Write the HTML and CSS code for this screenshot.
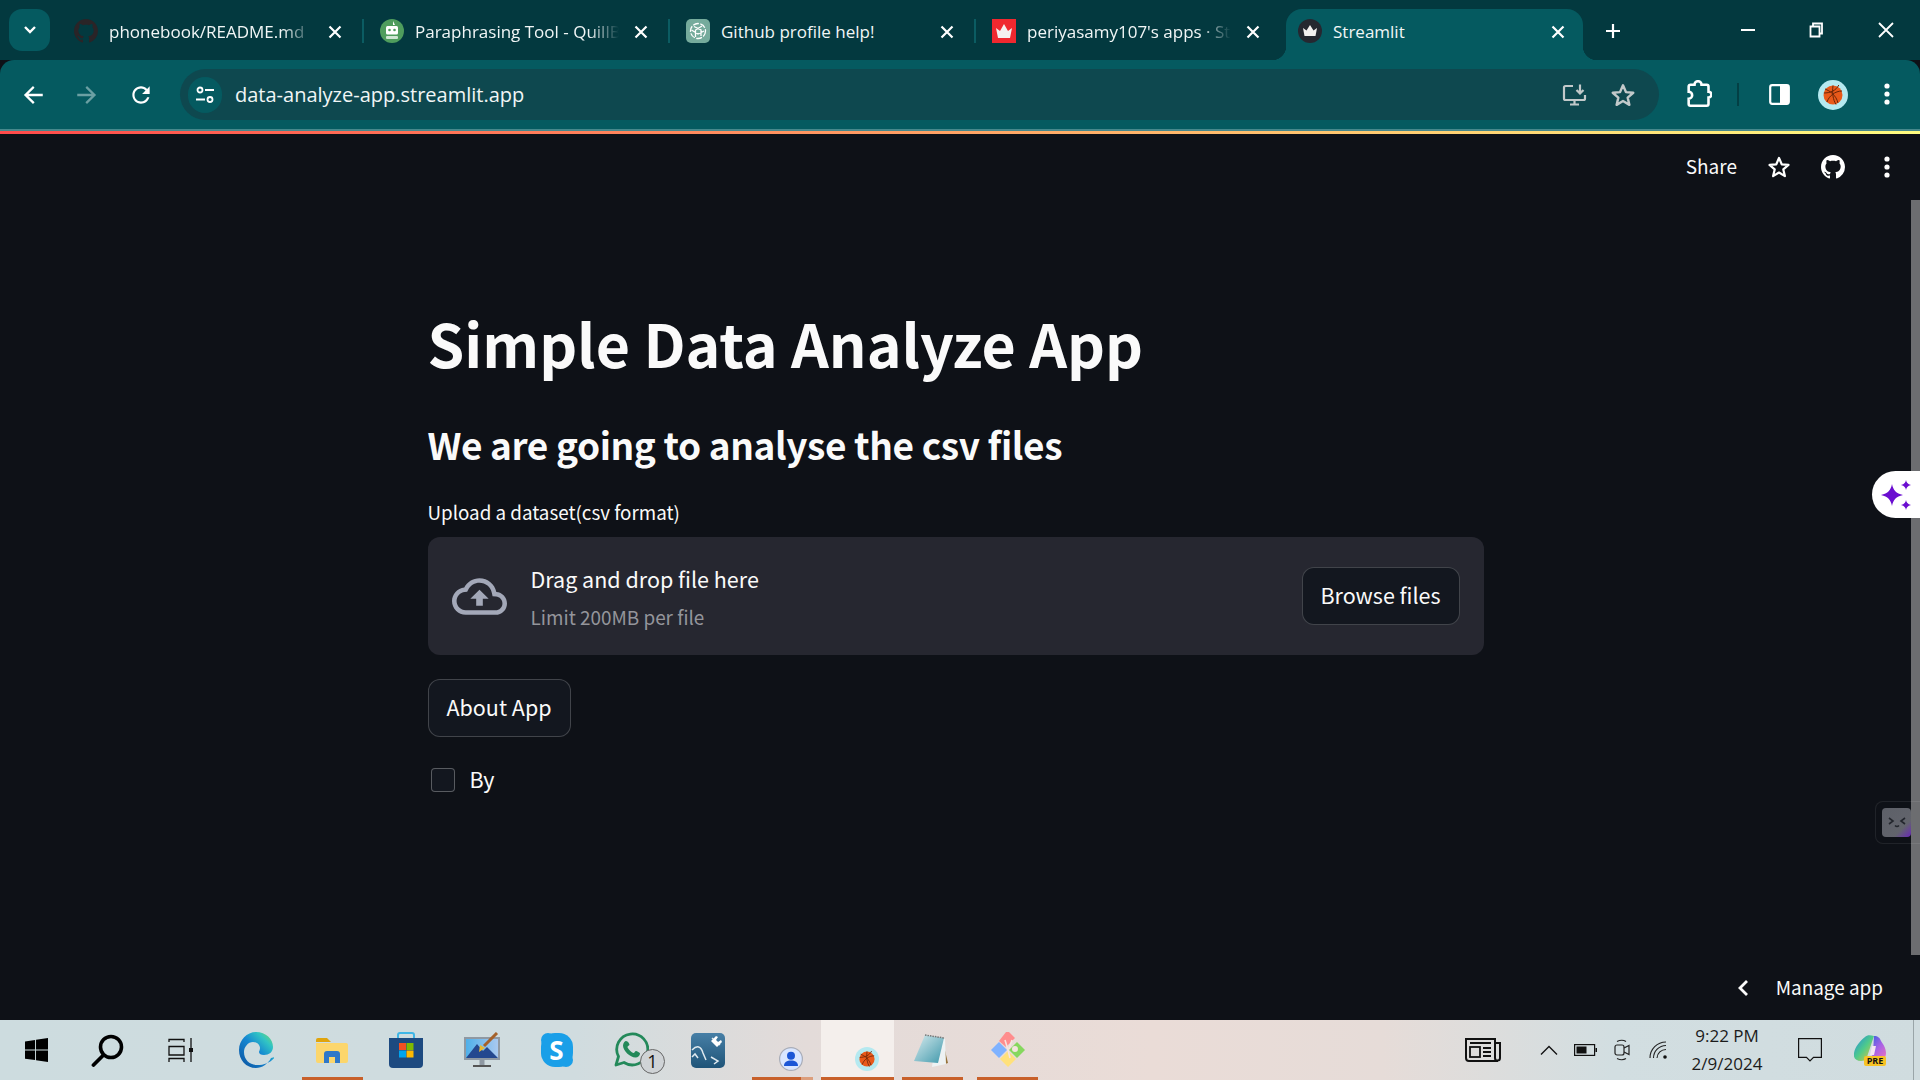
FILE: index.html
```html
<!DOCTYPE html>
<html lang="en">
<head>
<meta charset="utf-8">
<title>Streamlit</title>
<link rel="stylesheet" href="styles.css">
</head>
<body>
<svg class="sprite" aria-hidden="true">
  <defs>
    <symbol id="gh" viewBox="0 0 16 16"><path d="M8 0C3.58 0 0 3.58 0 8c0 3.54 2.29 6.53 5.47 7.59.4.07.55-.17.55-.38 0-.19-.01-.82-.01-1.49-2.01.37-2.53-.49-2.69-.94-.09-.23-.48-.94-.82-1.13-.28-.15-.68-.52-.01-.53.63-.01 1.08.58 1.23.82.72 1.21 1.87.87 2.33.66.07-.52.28-.87.51-1.07-1.78-.2-3.64-.89-3.64-3.95 0-.87.31-1.59.82-2.15-.08-.2-.36-1.02.08-2.12 0 0 .67-.21 2.2.82.64-.18 1.32-.27 2-.27.68 0 1.36.09 2 .27 1.53-1.04 2.2-.82 2.2-.82.44 1.1.16 1.92.08 2.12.51.56.82 1.27.82 2.15 0 3.07-1.87 3.75-3.65 3.95.29.25.54.73.54 1.48 0 1.07-.01 1.93-.01 2.2 0 .21.15.46.55.38A8.013 8.013 0 0016 8c0-4.42-3.58-8-8-8z"/></symbol>
    <symbol id="star" viewBox="0 0 24 24"><path d="M12 3l2.7 6.3 6.8.6-5.2 4.5 1.6 6.7-5.9-3.6-5.9 3.6 1.6-6.7-5.2-4.5 6.8-.6z" fill="none" stroke="currentColor" stroke-width="2.2" stroke-linejoin="round"/></symbol>
    <symbol id="dots" viewBox="0 0 18 24"><circle cx="9" cy="4" r="2.6" fill="currentColor"/><circle cx="9" cy="12" r="2.6" fill="currentColor"/><circle cx="9" cy="20" r="2.6" fill="currentColor"/></symbol>
    <symbol id="close" viewBox="0 0 18 18"><path d="M3.5 3.5l11 11M14.5 3.5l-11 11" stroke="currentColor" stroke-width="2.2" fill="none"/></symbol>
    <symbol id="ball" viewBox="0 0 30 30"><circle cx="15" cy="15" r="15" fill="#b5e9f0"/><circle cx="15" cy="15" r="9.500" fill="#e9591a"/><path d="M5.800 13c6 0 12-2 15-8M9 22c2-6 8-11 15-11M15 5.500c-1 8 0 14 3 19M7 9c5 2 11 6 13 14" stroke="#6b2508" stroke-width="1" fill="none"/></symbol>
    <linearGradient id="edgeG" x1="0" y1="1" x2="1" y2="0"><stop offset="0" stop-color="#0b4f9c"/><stop offset=".5" stop-color="#1587d2"/><stop offset=".75" stop-color="#31c4c4"/><stop offset="1" stop-color="#85dd55"/></linearGradient>
    <linearGradient id="wbG" x1="0" y1="0" x2="0" y2="1"><stop offset="0" stop-color="#477fa6"/><stop offset="1" stop-color="#1f5478"/></linearGradient>
    <linearGradient id="noteG" x1="0" y1="0" x2="1" y2="1"><stop offset="0" stop-color="#d9ecef"/><stop offset="1" stop-color="#3f98ab"/></linearGradient>
    <linearGradient id="paintG" x1="0" y1="0" x2="1" y2="0"><stop offset="0" stop-color="#4fb0ea"/><stop offset="1" stop-color="#a9c9f0"/></linearGradient>
    <linearGradient id="copG" x1="0" y1="0" x2="1" y2="1"><stop offset="0" stop-color="#1f8ae0"/><stop offset=".5" stop-color="#4fcb8a"/><stop offset="1" stop-color="#f6c530"/></linearGradient>
    <linearGradient id="copH" x1="0" y1="0" x2="1" y2="1"><stop offset="0" stop-color="#1d5fe0"/><stop offset=".55" stop-color="#a862e6"/><stop offset="1" stop-color="#ee74bc"/></linearGradient>
    <linearGradient id="sqG" x1="0" y1="0" x2="1" y2="1"><stop offset="0" stop-color="#5d6068"/><stop offset=".7" stop-color="#62646c"/><stop offset="1" stop-color="#6a28b8"/></linearGradient>
  </defs>
</svg>

<header class="tabstrip">
  <div class="tabmenu">
    <svg class="i-chev" viewBox="0 0 14 10"><path d="M2 2l5 5 5-5" fill="none" stroke="#fff" stroke-width="2.400"/></svg>
  </div>
  <div class="tab tab-sep">
    <svg class="fav fav-dark" viewBox="0 0 16 16"><use href="#gh"/></svg>
    <span class="tab-title tab-fade">phonebook/README.md</span>
    <svg class="tab-x"><use href="#close"/></svg>
  </div>
  <div class="tab tab-sep">
    <svg class="fav" viewBox="0 0 24 24"><circle cx="12" cy="12" r="12" fill="#4f9d5d"/><path d="M13 2l2 4h-2z" fill="#fff"/><rect x="6" y="7" width="12" height="8.500" rx="1.500" fill="#fff"/><circle cx="9.500" cy="11" r="1.300" fill="#4f9d5d"/><circle cx="14.500" cy="11" r="1.300" fill="#4f9d5d"/><rect x="6" y="17" width="12" height="3" rx="1" fill="#cfe6d3"/></svg>
    <span class="tab-title tab-fade">Paraphrasing Tool - QuillB</span>
    <svg class="tab-x"><use href="#close"/></svg>
  </div>
  <div class="tab tab-sep">
    <svg class="fav" viewBox="0 0 24 24"><rect width="24" height="24" rx="5" fill="#75ab9c"/><g fill="none" stroke="#fff" stroke-width="1.300"><circle cx="12" cy="12" r="7.500" stroke-dasharray="6 1.500"/><path d="M8 7.500l7 3.500v6M16 7l-6.500 4v7M5.500 11l6.500 4 6-3"/></g></svg>
    <span class="tab-title">Github profile help!</span>
    <svg class="tab-x"><use href="#close"/></svg>
  </div>
  <div class="tab">
    <svg class="fav" viewBox="0 0 24 24"><rect width="24" height="24" fill="#f0282f"/><path class="crown-w" d="M4 9l4 3 4-7 4 7 4-3-2 10H6z"/></svg>
    <span class="tab-title tab-fade">periyasamy107's apps · St</span>
    <svg class="tab-x"><use href="#close"/></svg>
  </div>
  <div class="tab tab-active">
    <svg class="fav" viewBox="0 0 24 24"><circle cx="12" cy="12" r="12" fill="#262730"/><path class="crown-w" d="M5 9l3.500 2.500L12 6l3.500 5.500L19 9l-1.500 8h-11z"/></svg>
    <span class="tab-title">Streamlit</span>
    <svg class="tab-x"><use href="#close"/></svg>
  </div>
  <svg class="tab-new" viewBox="0 0 18 18"><path d="M9 2v14M2 9h14" stroke="#fff" stroke-width="2.200"/></svg>
  <div class="winctl">
    <span class="winbtn"><svg class="i-win" viewBox="0 0 18 18"><path d="M2 9h14" stroke="#fff" stroke-width="2"/></svg></span>
    <span class="winbtn"><svg class="i-win" viewBox="0 0 18 18"><path d="M3.500 5.500h9v10h-9zM6 5V2.500h9v10h-2.500" fill="none" stroke="#fff" stroke-width="1.800"/></svg></span>
    <span class="winbtn winbtn-close"><svg class="i-win" viewBox="0 0 18 18"><path d="M2 2l14 14M16 2L2 16" stroke="#fff" stroke-width="1.800"/></svg></span>
  </div>
</header>

<nav class="toolbar">
  <span class="navbtn"><svg class="i-nav" viewBox="0 0 24 24"><path fill="#fff" d="M21 10.800H7.800l5.600-5.600L12 3.600 3.600 12l8.400 8.400 1.500-1.600-5.700-5.600H21z"/></svg></span>
  <span class="navbtn"><svg class="i-nav" viewBox="0 0 24 24"><path fill="#6ba0a3" d="M3 10.800h13.200l-5.600-5.600L12 3.600l8.400 8.400-8.400 8.400-1.500-1.600 5.700-5.600H3z"/></svg></span>
  <span class="navbtn"><svg class="i-nav" viewBox="0 0 24 24"><path fill="#fff" d="M17.650 6.350C16.200 4.900 14.210 4 12 4c-4.420 0-7.990 3.580-7.990 8s3.570 8 7.990 8c3.730 0 6.840-2.550 7.730-6h-2.080c-.82 2.330-3.040 4-5.650 4-3.310 0-6-2.690-6-6s2.690-6 6-6c1.660 0 3.140.69 4.220 1.780L13 11h7V4l-2.350 2.350z"/></svg></span>
  <div class="omnibox">
    <span class="omni-chip"><svg class="i-tune" viewBox="0 0 20 20"><circle cx="5" cy="5" r="2.500" fill="none" stroke="#fff" stroke-width="1.800"/><path d="M10 5h9M1 14.500h9" stroke="#fff" stroke-width="2"/><circle cx="15" cy="14.500" r="2.500" fill="none" stroke="#fff" stroke-width="1.800"/></svg></span>
    <span class="omni-url">data-analyze-app.streamlit.app</span>
    <span class="omni-btn"><svg class="i-install" viewBox="0 0 26 24"><path d="M11 3H3.500A1.500 1.500 0 0 0 2 4.500v11A1.500 1.500 0 0 0 3.500 17h18a1.500 1.500 0 0 0 1.500-1.500V12M8 21.500h9M12.500 17v4M18 1.500v9M14.500 7l3.500 3.500L21.500 7" fill="none" stroke="#c2c9ca" stroke-width="2.200"/></svg></span>
    <span class="omni-btn omni-star"><svg class="i-star"><use href="#star"/></svg></span>
  </div>
  <svg class="i-ext" viewBox="0 0 24 24"><path d="M4 5.500a1.500 1.500 0 0 1 1.500-1.500H9a3 3 0 0 1 6 0h4.500A1.500 1.500 0 0 1 21 5.500V10a2.500 2.500 0 0 1 0 5v5.500a1.500 1.500 0 0 1-1.500 1.500h-14A1.500 1.500 0 0 1 4 20.500V16a3 3 0 0 0 0-6z" fill="none" stroke="#fff" stroke-width="2.200"/></svg>
  <span class="tool-sep"></span>
  <svg class="i-panel" viewBox="0 0 21 21"><rect x="1.200" y="1.200" width="18.600" height="18.600" rx="2" fill="none" stroke="#fff" stroke-width="2.200"/><rect x="11" y="1" width="9" height="19" fill="#fff"/></svg>
  <svg class="avatar"><use href="#ball"/></svg>
  <svg class="i-dots"><use href="#dots"/></svg>
</nav>
<div class="stripe"></div>
<div class="rainbow"></div>

<div class="app">
  <div class="page">
    <div class="apphead">
      <span class="share">Share</span>
      <svg class="i-star head-star"><use href="#star"/></svg>
      <svg class="head-gh" viewBox="0 0 16 16"><use href="#gh"/></svg>
      <svg class="i-dots"><use href="#dots"/></svg>
    </div>
    <main class="block">
      <h1 class="title">Simple Data Analyze App</h1>
      <h3 class="subtitle">We are going to analyse the csv files</h3>
      <label class="upload-label">Upload a dataset(csv format)</label>
      <section class="dropzone">
        <svg class="i-cloud" viewBox="0 4 24 16"><path fill="#a3a8b8" d="M19.350 10.040C18.670 6.590 15.640 4 12 4 9.110 4 6.600 5.640 5.350 8.040 2.340 8.360 0 10.910 0 14c0 3.310 2.690 6 6 6h13c2.760 0 5-2.240 5-5 0-2.640-2.050-4.780-4.650-4.960zM19 18H6c-2.210 0-4-1.790-4-4 0-2.050 1.530-3.760 3.560-3.970l1.070-.11.5-.95C8.080 7.140 9.940 6 12 6c2.620 0 4.880 1.860 5.390 4.430l.3 1.500 1.530.11c1.560.1 2.780 1.410 2.780 2.960 0 1.650-1.350 3-3 3zM8 13h2.550v3h2.900v-3H16l-4-4z"/></svg>
        <div class="drop-text">
          <div class="drop-main">Drag and drop file here</div>
          <div class="drop-sub">Limit 200MB per file</div>
        </div>
        <button class="st-btn browse">Browse files</button>
      </section>
      <button class="st-btn about">About App</button>
      <div class="check-row">
        <span class="checkbox"></span>
        <span class="check-label">By</span>
      </div>
    </main>
    <div class="manage">
      <svg class="i-back" viewBox="0 0 12 18"><path d="M10 2L3 9l7 7" fill="none" stroke="#fafafa" stroke-width="2.800"/></svg>
      <span class="manage-text">Manage app</span>
    </div>
  </div>
  <div class="scrolltrack"><div class="scrollthumb"></div></div>
  <div class="ai-pill">
    <svg class="i-spark" viewBox="0 0 30 30"><path fill="#6a0dd0" d="M11 4c1.200 6 4 9.500 11 11-7 1.500-9.800 5-11 11-1.200-6-4-9.500-11-11 7-1.500 9.800-5 11-11zM25 0c.5 2.500 1.500 4 5 5-3.500 1-4.500 2.500-5 5-.5-2.500-1.500-4-5-5 3.500-1 4.500-2.500 5-5zM25 20c.5 2.500 1.500 4 5 5-3.500 1-4.500 2.500-5 5-.5-2.500-1.500-4-5-5 3.500-1 4.500-2.500 5-5z"/></svg>
  </div>
  <div class="term-widget">
    <svg class="i-term" viewBox="0 0 29 29"><rect width="29" height="29" rx="4" fill="url(#sqG)"/><path d="M7 10l4 3-4 3M23 10l-4 3 4 3M13 17.500q2 2 4 0" fill="none" stroke="#23262d" stroke-width="1.600"/></svg>
  </div>
</div>

<footer class="taskbar">
  <span class="slot"><svg class="ti-start" viewBox="0 0 24 25"><path d="M0 3.500L10.500 2v10H0zM11.500 1.900L24 0v12H11.500zM0 13h10.500v10L0 21.500zM11.500 13H24v12l-12.500-1.900z"/></svg></span>
  <span class="slot"><svg class="ti-search" viewBox="0 0 33 33"><circle cx="20" cy="13" r="10.500" fill="none" stroke="#000" stroke-width="3.600"/><path d="M12 21.500L2.500 31" stroke="#000" stroke-width="3.800" stroke-linecap="round"/></svg></span>
  <span class="slot"><svg class="ti-view" viewBox="0 0 25 24"><path d="M1 4V1.500h15V4M1 8.500h15v8.500H1zM1 24v-3.500h15V24M23 0v24" fill="none" stroke="#111" stroke-width="1.300"/><rect x="21" y="10" width="4" height="4" fill="#111"/></svg></span>
  <span class="slot"><svg class="ti-36 nudge-3" viewBox="0 0 36 36"><path fill="url(#edgeG)" d="M33 26c-3 6-9 10-15 10C8 36 1 28 1 18 1 8 9 0 18 0c10 0 17 7 17 15 0 5-4 8-9 8-3 0-5-1-5-3 0-1 1-2 1-4 0-3-3-6-7-6-5 0-9 5-9 10 0 8 6 13 13 13 8 0 14-3 18-8z"/></svg></span>
  <span class="slot slot-u"><svg class="ti-folder nudge-2" viewBox="0 0 32 26"><path fill="#e0a40c" d="M0 3a2 2 0 0 1 2-2h9l4 4H0z"/><path fill="#fcd66c" d="M0 6h30a2 2 0 0 1 2 2v16a2 2 0 0 1-2 2H2a2 2 0 0 1-2-2z"/><path fill="#2f78c9" d="M8 26v-9a3 3 0 0 1 3-3h10a3 3 0 0 1 3 3v9h-5v-6h-6v6z"/></svg></span>
  <span class="slot"><svg class="ti-36 nudge-3" viewBox="0 0 36 36"><path d="M10 8V3a2 2 0 0 1 2-2h12a2 2 0 0 1 2 2v5" fill="none" stroke="#3fb6e6" stroke-width="2"/><path fill="#1d4a80" d="M1 6h34v26a4 4 0 0 1-4 4H5a4 4 0 0 1-4-4z"/><rect x="11" y="11" width="7" height="7" fill="#f25022"/><rect x="18.500" y="11" width="7" height="7" fill="#7fba00"/><rect x="11" y="18.500" width="7" height="7" fill="#00a4ef"/><rect x="18.500" y="18.500" width="7" height="7" fill="#ffb900"/></svg></span>
  <span class="slot"><svg class="ti-36 nudge-2" viewBox="0 0 36 36"><rect x="0" y="5" width="36" height="23" fill="#8f99a3"/><rect x="2" y="7" width="32" height="19" fill="url(#paintG)"/><path fill="#24488f" d="M2 26l11-14 6 7 4-4 11 11z"/><rect x="15.500" y="28" width="5" height="5" fill="#8f99a3"/><rect x="9" y="33" width="18" height="2" fill="#555"/><path d="M33 1L20 14" stroke="#a5612a" stroke-width="3"/><path fill="#e8b932" d="M16 13l5 3-6 4z"/></svg></span>
  <span class="slot"><span class="skype nudge-2"><svg class="ti-skype" viewBox="0 0 34 36"><rect x="1" y="1" width="32" height="34" rx="14" fill="#1a9fe8"/><circle cx="8" cy="8" r="7" fill="#1a9fe8"/><circle cx="26" cy="28" r="7" fill="#1a9fe8"/></svg><span class="skype-s">S</span></span></span>
  <span class="slot slot-wa"><svg class="ti-36 nudge-3" viewBox="0 0 36 36"><path d="M3 33l2.500-8.500A15.500 15.500 0 1 1 11 30.500z" fill="none" stroke="#23895a" stroke-width="2.800" stroke-linejoin="round"/><path fill="#23895a" d="M13 9c-1 0-3 2-3 4.500 0 5 7 12 12.500 12 2.500 0 4.500-2 4.500-4 0-1-3.500-2.500-4-2.500-1 0-1.500 2-2.500 2-1.500 0-6-4.500-6-6 0-1 2-1.500 2-2.500 0-.5-1.500-3.500-3.500-3.500z"/></svg><span class="wa-badge">1</span></span>
  <span class="slot"><svg class="ti-wb" viewBox="0 0 34 35"><rect width="34" height="35" rx="5" fill="url(#wbG)"/><path d="M1 17c5-5 9-4 11 3l3 7M1 24l3-3 3 4M20 24l7 4-4 3M21 5l8 7" fill="none" stroke="#dfe9ef" stroke-width="1.500"/><path d="M20 8l5-5 2 1-2 3 2 2 3-2 1 2-5 5z" fill="#fff"/></svg></span>
  <span class="slot slot-u2"><svg class="ti-user" viewBox="0 0 24 24"><circle cx="12" cy="12" r="11.400" fill="#d9e6ff" stroke="#a9adb8" stroke-width="1.200"/><circle cx="12" cy="8.800" r="4" fill="#1b56d6"/><path fill="#1b56d6" d="M5 19c0-4 3-5.500 7-5.500s7 1.500 7 5.500z"/></svg></span>
  <span class="slot slot-active"><svg class="ti-user" viewBox="0 0 30 30"><use href="#ball"/></svg></span>
  <span class="slot slot-u"><svg class="ti-note nudge-4" viewBox="0 0 34 34"><path fill="#96723a" d="M28 5l6 25-3 1z"/><path fill="#eef2f3" d="M22 4l9 2 1 25-14 3z"/><path fill="url(#noteG)" d="M11 2l19 3-6 25-24-2z"/><path d="M11 2l19 3" stroke="#777" stroke-width="1.500" stroke-dasharray="1.500 1"/></svg></span>
  <span class="slot slot-u"><svg class="ti-36" viewBox="0 0 36 36"><path fill="#ff8d8d" d="M16 0h3l6 6-9 9-7-6z"/><path fill="#7fb2ff" d="M9 10l8 8-8 8-8-8z"/><path fill="#86d85e" d="M27 10l8 8-8 8-8-8z"/><path fill="#ffe17c" d="M18 19l8 8-8 8-8-8z"/><path d="M15 8l3 10 2 8M22 8l-3 9" stroke="#f6e4df" stroke-width="1.600" fill="none"/><circle cx="25" cy="17" r="3" fill="#f3e5df"/></svg></span>
  <div class="tray">
    <svg class="tr-news" viewBox="0 0 36 24"><path d="M1 1h29v19a3 3 0 0 0 3 3H4a3 3 0 0 1-3-3zM30 5h5v15a2.500 2.500 0 0 1-5 0" fill="none" stroke="#111" stroke-width="2"/><rect x="5" y="9" width="10" height="10" fill="none" stroke="#111" stroke-width="1.800"/><path d="M5 5h21M18 10h8M18 14h8M18 18h8" stroke="#111" stroke-width="1.800"/></svg>
    <svg class="tr-up" viewBox="0 0 18 10"><path d="M1 9.500L9 1.500l8 8" fill="none" stroke="#111" stroke-width="1.300"/></svg>
    <svg class="tr-batt" viewBox="0 0 23 12"><rect x=".6" y=".6" width="20" height="10.800" fill="none" stroke="#111" stroke-width="1.200"/><rect x="2.500" y="2.500" width="10" height="7" fill="#111"/><rect x="21.500" y="4" width="1.500" height="4" fill="#111"/></svg>
    <svg class="tr-cam" viewBox="0 0 16 22"><rect x="1" y="6" width="9" height="10" rx="2" fill="none" stroke="#222" stroke-width="1.200"/><path d="M10 9l5-2.500v9L10 13M3 2.500q5-2.500 9 0M3 19.500q5 2.500 9 0" fill="none" stroke="#222" stroke-width="1.200"/></svg>
    <svg class="tr-wifi" viewBox="0 0 18 18"><path d="M1 17A16 16 0 0 1 17 1M4.500 17A12.500 12.500 0 0 1 17 4.500M8 17a9 9 0 0 1 9-8.500" fill="none" stroke="#222" stroke-width="1.100"/><circle cx="16" cy="16" r="1.800" fill="#111"/></svg>
    <div class="clock"><span>9:22 PM</span><span>2/9/2024</span></div>
    <svg class="tr-notif" viewBox="0 0 24 24"><path d="M.6.6h22.800v18.800H15.500L12 23l-3.500-3.600H.6z" fill="none" stroke="#111" stroke-width="1.200"/></svg>
    <span class="copilot">
      <svg class="tr-copilot" viewBox="0 0 32 30"><path fill="url(#copG)" d="M11 2c2-2 5-2 9-1L13 22c-1 3-3 4-6 4-5 0-8-3-7-8 1-6 6-12 11-16z"/><path fill="url(#copH)" d="M20 1c4 0 6 2 7 5 2 3 5 7 5 12 0 5-3 7-7 7H13c3-1 5-3 6-7z"/><path fill="#f5e6f3" d="M18 11h4l-2 9h-4z"/></svg>
      <span class="pre">PRE</span>
    </span>
    <span class="desk-line"></span>
  </div>
</footer>
</body>
</html>
```

FILE: styles.css
```css
* { box-sizing: border-box; }
html, body { margin: 0; height: 100%; }
body {
  width: 1920px;
  height: 1080px;
  overflow: hidden;
  display: flex;
  flex-direction: column;
  background: #0e1117;
  font-family: "Noto Sans CJK JP", "Source Sans Pro", sans-serif;
  color: #fafafa;
}
.sprite { position: absolute; width: 0; height: 0; }

/* Tab strip */
.tabstrip {
  height: 60px;
  flex: none;
  display: flex;
  align-items: flex-start;
  padding: 9px 0 0 9px;
  background: #03393f;
  font-family: "Open Sans", "Liberation Sans", sans-serif;
}
.tabmenu {
  width: 41px;
  height: 42px;
  margin-right: 8px;
  border-radius: 13px;
  background: #055a60;
  display: flex;
  align-items: center;
  justify-content: center;
}
.i-chev { width: 14px; height: 10px; }
.tab {
  position: relative;
  width: 306px;
  height: 51px;
  flex: none;
  display: flex;
  align-items: flex-start;
  padding: 7px 20px 0 16px;
  color: #f1f6f6;
}
.tab-sep::after {
  content: "";
  position: absolute;
  right: 0;
  top: 10px;
  width: 2px;
  height: 24px;
  background: #0b5c62;
}
.fav { width: 24px; height: 24px; flex: none; margin-top: 3px; }
.fav-dark { fill: #2a2427; }
.crown-w { fill: #f5f0f0; }
.tab-title {
  flex: 1;
  min-width: 0;
  margin: 2px 0 0 11px;
  font-size: 17px;
  line-height: 28px;
  white-space: nowrap;
  overflow: hidden;
}
.tab-fade {
  -webkit-mask-image: linear-gradient(90deg, #000 80%, transparent 94%);
  mask-image: linear-gradient(90deg, #000 80%, transparent 94%);
}
.tab-x { width: 18px; height: 18px; flex: none; margin-top: 7px; color: #fff; }
.tab-active {
  width: 297px;
  margin-left: 4px;
  padding: 7px 16px 0 12px;
  background: #055a60;
  border-radius: 16px 16px 0 0;
}
.tab-active::before,
.tab-active::after {
  content: "";
  position: absolute;
  bottom: 0;
  width: 14px;
  height: 14px;
}
.tab-active::before { left: -14px; background: radial-gradient(circle at 0 0, transparent 14px, #055a60 14.5px); }
.tab-active::after { right: -14px; background: radial-gradient(circle at 100% 0, transparent 14px, #055a60 14.5px); }
.tab-new { width: 18px; height: 18px; margin: 13px 0 0 21px; flex: none; }
.winctl { margin-left: auto; margin-right: 2px; display: flex; }
.winbtn { width: 68px; height: 30px; margin-top: 6px; display: flex; align-items: center; justify-content: center; }
.winbtn-close { padding-left: 3px; }
.i-win { width: 18px; height: 18px; }

/* Toolbar */
.toolbar {
  height: 69px;
  flex: none;
  display: flex;
  align-items: flex-start;
  padding: 9px 0 0 6px;
  background: #055a60;
  border-radius: 14px 14px 0 0;
}
.navbtn { width: 54px; height: 51px; display: flex; align-items: center; justify-content: center; }
.i-nav { width: 26px; height: 26px; }
.omnibox {
  width: 1479px;
  height: 51px;
  margin-left: 12px;
  padding: 0 12px 0 8px;
  border-radius: 26px;
  background: #0e484f;
  display: flex;
  align-items: center;
  font-family: "Open Sans", "Liberation Sans", sans-serif;
}
.omni-chip {
  width: 34px;
  height: 36px;
  border-radius: 18px;
  background: #055a60;
  display: flex;
  align-items: center;
  justify-content: center;
}
.i-tune { width: 20px; height: 20px; }
.omni-url { flex: 1; margin-left: 13px; font-size: 20px; color: #f1f6f6; }
.omni-btn { width: 49px; display: flex; justify-content: center; }
.i-install { width: 26px; height: 24px; margin-left: 2px; }
.i-star { width: 26px; height: 26px; color: #fff; }
.omni-star .i-star { color: #c2c9ca; }
.i-ext { width: 28px; height: 28px; margin: 11px 0 0 25px; flex: none; }
.tool-sep { width: 2px; height: 23px; margin: 14px 0 0 25px; background: #033f44; flex: none; }
.i-panel { width: 21px; height: 21px; margin: 15px 0 0 30px; flex: none; }
.avatar { width: 30px; height: 30px; margin: 11px 0 0 28px; flex: none; }
.i-dots { width: 18px; height: 24px; color: #fff; flex: none; }
.toolbar .i-dots { margin: 13px 0 0 30px; }

.stripe { height: 2px; flex: none; background: #47888c; }
.rainbow { height: 3px; flex: none; background: linear-gradient(90deg, #ff4b4b 0%, #fffd80 100%); }

/* App */
.app { position: relative; flex: 1; min-height: 0; display: flex; background: #0e1117; }
.page { flex: 1; min-width: 0; display: flex; flex-direction: column; }
.apphead {
  height: 66px;
  flex: none;
  display: flex;
  align-items: center;
  justify-content: flex-end;
  padding-right: 15px;
}
.share { font-size: 19px; line-height: 24px; margin: 0 30px 2px 0; }
.head-star { margin-right: 30px; width: 24px; height: 24px; }
.head-gh { width: 24px; height: 24px; margin-right: 33px; fill: #fff; }
.block { width: 1056px; margin: 0 auto; padding-top: 103px; }
.title { margin: 0; font-size: 59px; line-height: 80px; font-weight: 700; }
.subtitle { margin: 34px 0 0; font-size: 37px; line-height: 54px; font-weight: 600; letter-spacing: -.4px; }
.upload-label { display: block; margin-top: 26px; font-size: 18.8px; line-height: 30px; }
.dropzone {
  height: 118px;
  margin-top: 10px;
  padding: 0 24px;
  border-radius: 12px;
  background: #262730;
  display: flex;
  align-items: center;
}
.i-cloud { width: 55px; height: 37px; flex: none; }
.drop-text { flex: 1; margin-left: 24px; }
.drop-main { font-size: 21.5px; line-height: 36px; }
.drop-sub { margin-top: 5px; font-size: 18.9px; line-height: 30px; color: #94959b; }
.st-btn {
  height: 58px;
  border: 1.500px solid rgba(250, 250, 250, .2);
  border-radius: 12px;
  background: #13171f;
  color: #fafafa;
  font: inherit;
  font-size: 21.5px;
  padding: 0 0 3px;
}
.browse { width: 158px; }
.about { display: block; width: 143px; margin-top: 24px; }
.check-row { margin-top: 31px; display: flex; align-items: center; height: 24px; padding-left: 3px; }
.checkbox { width: 24px; height: 24px; border: 1.500px solid rgba(250, 250, 250, .3); border-radius: 4px; background: #13171f; }
.check-label { margin: 0 0 2px 15px; font-size: 21.5px; line-height: 24px; }
.manage {
  margin-top: auto;
  height: 64px;
  display: flex;
  align-items: center;
  justify-content: flex-end;
  padding-right: 28px;
}
.i-back { width: 12px; height: 18px; margin-right: 27px; }
.manage-text { font-size: 18.9px; line-height: 24px; margin-bottom: 2px; }
.scrolltrack { width: 9px; flex: none; padding: 66px 0 65px; }
.scrollthumb { height: 100%; background: #6c6d70; }

.ai-pill {
  position: absolute;
  right: 0;
  top: 337px;
  width: 48px;
  height: 47px;
  border-radius: 24px 0 0 24px;
  background: #fff;
  display: flex;
  align-items: center;
  padding-left: 9px;
}
.i-spark { width: 30px; height: 30px; }
.term-widget {
  position: absolute;
  right: 0;
  top: 667px;
  width: 45px;
  height: 43px;
  padding: 6px 0 0 6px;
  border: 1.500px solid rgba(250, 250, 250, .08);
  border-right: 0;
  border-radius: 8px 0 0 8px;
}
.i-term { width: 29px; height: 29px; display: block; }

/* Taskbar */
.taskbar {
  height: 60px;
  flex: none;
  display: flex;
  gap: 14px;
  padding-left: 2px;
  background: linear-gradient(90deg, #cddcdf 0%, #d0dcdf 30%, #e3dbd9 42%, #eadcd7 60%, #e6dcd8 72%, #d2dee1 84%, #d0dcdf 100%);
}
.slot {
  position: relative;
  width: 61px;
  height: 60px;
  flex: none;
  display: flex;
  align-items: center;
  justify-content: center;
  border-bottom: 3px solid transparent;
  padding-top: 3px;
}
.slot-u { border-bottom-color: #c8602a; }
.slot-u2 { border-image: linear-gradient(90deg, #c8602a 80%, #dc9e7c 80%) 1; padding: 0 0 6px 16px; align-items: flex-end; }
.slot-active {
  width: 73px;
  margin: 0 -6px;
  background: #f4efec;
  border-bottom-color: #c8602a;
  padding: 0 0 6px 18px;
  align-items: flex-end;
}
.nudge-2 { margin-right: 2px; }
.nudge-3 { margin-right: 3px; }
.nudge-4 { margin-right: 4px; }
.ti-start { width: 23px; height: 24px; margin-left: 7px; }
.ti-search { width: 33px; height: 33px; }
.ti-view { width: 25px; height: 24px; margin-right: 5px; }
.ti-36 { width: 36px; height: 36px; }
.ti-folder { width: 32px; height: 26px; }
.skype { position: relative; display: flex; align-items: center; justify-content: center; width: 34px; height: 36px; }
.ti-skype { position: absolute; inset: 0; width: 34px; height: 36px; }
.skype-s { position: relative; font: 700 26px/36px "Open Sans", sans-serif; color: #fff; }
.wa-badge {
  position: absolute;
  left: 38px;
  top: 29px;
  width: 25px;
  height: 25px;
  border-radius: 50%;
  background: #cfd3d6;
  border: 1px solid #666;
  color: #111;
  font: 18px/23px "Open Sans", sans-serif;
  text-align: center;
}
.ti-wb { width: 34px; height: 35px; }
.ti-user { width: 24px; height: 24px; }
.ti-note { width: 34px; height: 34px; }

.tray { flex: 1; display: flex; align-items: center; justify-content: flex-end; }
.tr-news { width: 36px; height: 24px; margin-right: 39px; }
.tr-up { width: 18px; height: 10px; margin-right: 16px; }
.tr-batt { width: 23px; height: 12px; margin-right: 17px; }
.tr-cam { width: 16px; height: 22px; margin-right: 19px; }
.tr-wifi { width: 18px; height: 18px; margin-right: 23px; }
.clock {
  width: 74px;
  margin-right: 34px;
  display: flex;
  flex-direction: column;
  align-items: center;
  font: 17px/28px "Open Sans", "Liberation Sans", sans-serif;
  color: #1b1b1b;
}
.tr-notif { width: 24px; height: 24px; margin-right: 32px; }
.copilot { position: relative; width: 32px; height: 30px; margin-right: 27px; }
.tr-copilot { width: 32px; height: 30px; display: block; }
.pre {
  position: absolute;
  right: 0;
  bottom: -1px;
  width: 22px;
  height: 10px;
  border-radius: 2px;
  background: #f7c325;
  color: #111;
  font: 700 9px/10px "Open Sans", sans-serif;
  text-align: center;
}
.desk-line { width: 1px; height: 60px; background: #9aa5a8; margin-right: 6px; }
```
